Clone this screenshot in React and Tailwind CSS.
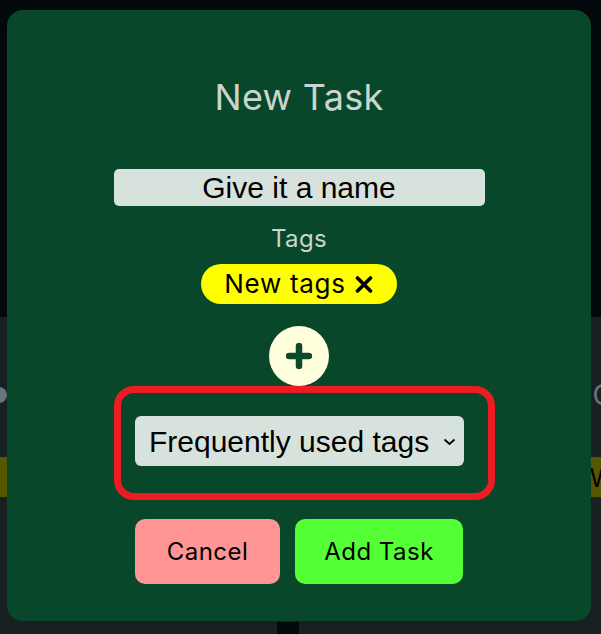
import { useState } from "react";

const poppins = { fontFamily: "Inter, 'Noto Sans', sans-serif" };

const NewTaskModal = () => {
    const [name, setName] = useState("");
    const [tags, setTags] = useState(["New tags"]);

    return (
        <div className="absolute left-[7px] top-[10px] w-[584px] h-[611px] rounded-[16px] bg-[#09472a] flex flex-col items-center">
            <h1 className="mt-[65px] h-[44px] leading-[44px] text-[36px] text-[#c9d6cf] font-normal tracking-[0.3px]" style={poppins}>
                New Task
            </h1>

            <input
                type="text"
                value={name}
                onChange={(e) => setName(e.target.value)}
                placeholder="Give it a name"
                className="mt-[50px] w-[371px] h-[37px] rounded-[5px] bg-[#d8e2dd] text-center text-[30px] leading-[37px] text-black placeholder:text-black outline-none font-['Liberation_Sans',Arial,sans-serif]"
            />

            <p className="mt-[17px] h-[32px] leading-[32px] text-[24px] text-[#c9d6cf] tracking-[0.4px]" style={poppins}>
                Tags
            </p>

            <div className="mt-[9px] flex gap-2">
                {tags.map((tag) => (
                    <div key={tag} className="h-[40px] rounded-full bg-[#ffff00] pl-[23px] pr-[24px] flex items-center gap-[9px]">
                        <span className="text-[26px] leading-[40px] text-black tracking-[0.7px]" style={poppins}>{tag}</span>
                        <button type="button" onClick={() => setTags(tags.filter(t => t !== tag))} className="flex items-center">
                            <svg width="18" height="17" viewBox="0 0 18 17">
                                <path d="M2.5 2 L15.5 15 M15.5 2 L2.5 15" stroke="black" strokeWidth="3.6" strokeLinecap="round" />
                            </svg>
                        </button>
                    </div>
                ))}
            </div>

            <button type="button" className="mt-[22px] w-[60px] h-[60px] rounded-full bg-[#ffffdd] flex items-center justify-center">
                <svg width="26" height="26" viewBox="0 0 26 26">
                    <path d="M13 3 V23 M3 13 H23" stroke="#0b4a2b" strokeWidth="6.5" strokeLinecap="round" />
                </svg>
            </button>

            <div className="self-start ml-[107px] w-[381px] h-[114px] rounded-[20px] border-[7px] border-[#ed1c24] pl-[14px] pt-[23px]">
                <div className="relative w-[329px] h-[50px]">
                    <select
                        defaultValue=""
                        className="appearance-none w-full h-full rounded-[6px] bg-[#d8e2dd] pl-[14px] text-[30px] text-black outline-none font-['Liberation_Sans',Arial,sans-serif]"
                    >
                        <option value="" disabled>Frequently used tags</option>
                        <option value="work">work</option>
                        <option value="home">home</option>
                    </select>
                    <svg className="pointer-events-none absolute right-[8px] top-[22px]" width="13" height="8" viewBox="0 0 13 8">
                        <path d="M1.5 1.5 L6.5 6 L11.5 1.5" stroke="black" strokeWidth="1.8" fill="none" />
                    </svg>
                </div>
            </div>

            <div className="mt-[19px] flex gap-[15px]">
                <button type="button" className="w-[145px] h-[65px] rounded-[10px] bg-[#ff9595] text-[24px] text-black tracking-[0.5px]" style={poppins}>
                    Cancel
                </button>
                <button type="button" className="w-[168px] h-[65px] rounded-[10px] bg-[#55ff35] text-[24px] text-black tracking-[0.5px]" style={poppins}>
                    Add Task
                </button>
            </div>
        </div>
    );
};

export default function App() {
    return (
        <div className="relative w-[601px] h-[634px] overflow-hidden bg-[#172122]">
            {/* page behind the modal */}
            <div className="h-[317px] bg-[#03080c]" />
            <div className="mt-[67px] h-[22px] flex justify-between items-center">
                <div className="-ml-[9px] w-[16px] h-[16px] rounded-full bg-[#6a7380]" />
                <span className="-mr-[12px] text-[28px] leading-[22px] text-[#6d737b]" style={poppins}>C</span>
            </div>
            <div className="mt-[51px] h-[40px] bg-[#575700] flex justify-end items-center overflow-hidden">
                <span className="-mr-[14px] text-[26px] text-black" style={poppins}>W</span>
            </div>
            <div className="mt-[125px] ml-[277px] w-[22px] h-[13px] bg-[#03080c]" />

            <NewTaskModal />
        </div>
    );
}
